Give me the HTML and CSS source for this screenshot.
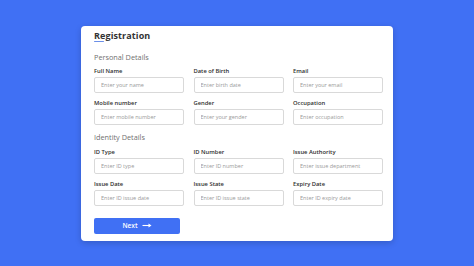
FILE: index.html
```html
<!DOCTYPE html>
<html lang="en">
<head>
<meta charset="utf-8">
<title>Registration</title>
<link rel="stylesheet" href="styles.css">
</head>
<body>
<div class="card">
  <h1 class="title">Registration</h1>
  <form class="form">
    <h2 class="section">Personal Details</h2>
    <div class="grid">
      <div class="field"><label>Full Name</label><input type="text" placeholder="Enter your name"></div>
      <div class="field"><label>Date of Birth</label><input type="text" placeholder="Enter birth date"></div>
      <div class="field"><label>Email</label><input type="text" placeholder="Enter your email"></div>
      <div class="field"><label>Mobile number</label><input type="text" placeholder="Enter mobile number"></div>
      <div class="field"><label>Gender</label><input type="text" placeholder="Enter your gender"></div>
      <div class="field"><label>Occupation</label><input type="text" placeholder="Enter occupation"></div>
    </div>
    <h2 class="section section-2">Identity Details</h2>
    <div class="grid grid-2">
      <div class="field"><label>ID Type</label><input type="text" placeholder="Enter ID type"></div>
      <div class="field"><label>ID Number</label><input type="text" placeholder="Enter ID number"></div>
      <div class="field"><label>Issue Authority</label><input type="text" placeholder="Enter issue department"></div>
      <div class="field"><label>Issue Date</label><input type="text" placeholder="Enter ID issue date"></div>
      <div class="field"><label>Issue State</label><input type="text" placeholder="Enter ID issue state"></div>
      <div class="field"><label>Expiry Date</label><input type="text" placeholder="Enter ID expiry date"></div>
    </div>
    <button type="button" class="next">
      <span>Next</span>
      <svg class="arrow" width="10" height="5" viewBox="0 0 10 5"><path d="M0.5 2.5H8" stroke="#fff" stroke-width="1.1" fill="none"/><path d="M6.5 0.6L9.5 2.5L6.5 4.4Z" fill="#fff"/></svg>
    </button>
  </form>
</div>
</body>
</html>
```

FILE: styles.css
```css
* { box-sizing: border-box; }
html, body { margin: 0; padding: 0; }
body {
  background: #4070f4;
  min-height: 100vh;
  display: flex;
  align-items: center;
  justify-content: center;
  font-family: "Open Sans", "Liberation Sans", sans-serif;
}
.card {
  width: 312px;
  height: 215px;
  background: #fff;
  border-radius: 4px;
  padding: 3px 10px 0 13px;
  box-shadow: 0 2px 6px rgba(0, 0, 0, 0.18);
}
.title {
  position: relative;
  margin: 0;
  font-size: 9px;
  line-height: 13px;
  height: 14px;
  font-weight: 700;
  color: #333;
  letter-spacing: 0.1px;
}
.title::before {
  content: "";
  position: absolute;
  left: 0;
  bottom: 0.5px;
  width: 10px;
  height: 1.2px;
  border-radius: 1px;
  background: #6b8fe8;
}
.form { margin: 0; }
.section {
  margin: 9px 0 0;
  font-size: 7.3px;
  line-height: 10px;
  font-weight: 500;
  color: #707070;
}
.section-2 { margin-top: 7px; }
.grid {
  display: grid;
  grid-template-columns: repeat(3, 90px);
  column-gap: 9.5px;
  row-gap: 6px;
  margin-top: 5px;
}
.grid-2 { margin-top: 6px; }
.field {
  display: flex;
  flex-direction: column;
  gap: 2px;
}
.field label {
  font-size: 5.8px;
  line-height: 8px;
  font-weight: 600;
  color: #2e2e2e;
}
.field input {
  width: 90px;
  height: 16px;
  margin: 0;
  padding: 0 0 0 6px;
  border: 1px solid #d9d9d9;
  border-radius: 2px;
  font-family: inherit;
  font-size: 5.5px;
  color: #333;
  background: #fff;
  outline: none;
}
.field input::placeholder { color: #9a9a9a; }
.next {
  margin-top: 12px;
  width: 86px;
  height: 16px;
  border: none;
  border-radius: 2px;
  background: #4070f4;
  color: #fff;
  font-family: inherit;
  font-size: 6.5px;
  font-weight: 600;
  display: flex;
  align-items: center;
  justify-content: center;
  gap: 4px;
  padding: 0;
}
.arrow { display: block; }
```
